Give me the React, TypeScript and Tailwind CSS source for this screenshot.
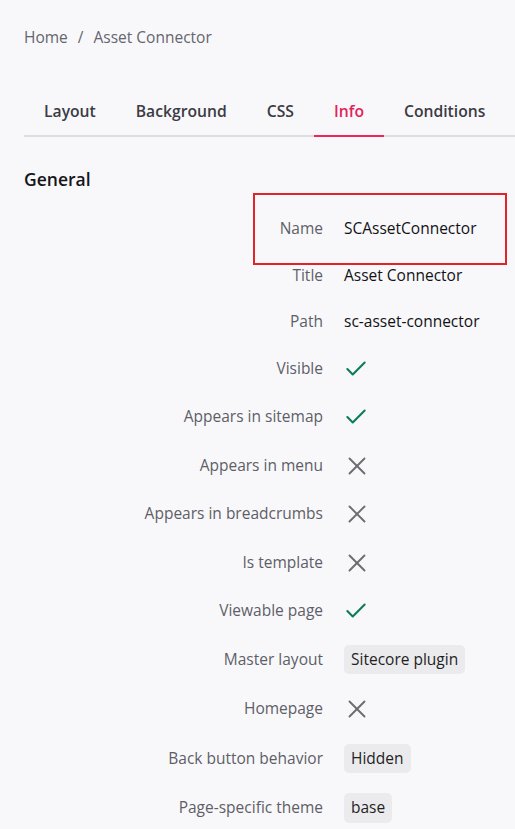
import { Check, X } from "lucide-react";

type Row = {
  label: string;
  kind: "text" | "yes" | "no" | "tag";
  value?: string;
  h: string;
};

const rows: Row[] = [
  { label: "Title", kind: "text", value: "Asset Connector", h: "h-[47px]" },
  { label: "Path", kind: "text", value: "sc-asset-connector", h: "h-[46px]" },
  { label: "Visible", kind: "yes", h: "h-[47px]" },
  { label: "Appears in sitemap", kind: "yes", h: "h-[49px]" },
  { label: "Appears in menu", kind: "no", h: "h-[49px]" },
  { label: "Appears in breadcrumbs", kind: "no", h: "h-[48px]" },
  { label: "Is template", kind: "no", h: "h-[49px]" },
  { label: "Viewable page", kind: "yes", h: "h-[48px]" },
  { label: "Master layout", kind: "tag", value: "Sitecore plugin", h: "h-[49px]" },
  { label: "Homepage", kind: "no", h: "h-[50px]" },
  { label: "Back button behavior", kind: "tag", value: "Hidden", h: "h-[49px]" },
  { label: "Page-specific theme", kind: "tag", value: "base", h: "h-[50px]" },
];

const tabs = ["Layout", "Background", "CSS", "Info", "Conditions"];

function Value({ row }: { row: Row }) {
  if (row.kind === "yes")
    return <Check className="-ml-[1px] h-[26px] w-[26px] text-[#0b7a5d]" strokeWidth={1.9} />;
  if (row.kind === "no")
    return <X className="-ml-[2px] h-[30px] w-[30px] text-[#6c6c72]" strokeWidth={1.5} />;
  if (row.kind === "tag")
    return (
      <span className="rounded-[5px] bg-[#ebebee] px-[7px] py-[3px] text-[#1f1f24]">{row.value}</span>
    );
  return <span className="text-[#121216]">{row.value}</span>;
}

export default function App() {
  return (
    <div className="min-h-[829px] bg-[#f8f8fa] font-['Open_Sans',sans-serif] text-[15.5px]">
      <div className="flex items-center gap-[10px] px-[24px] pt-[26px] text-[#65656d]">
        <span>Home</span>
        <span>/</span>
        <span>Asset Connector</span>
      </div>

      <div className="mx-[24px] mr-0 mt-[51px] flex border-b-2 border-[#dedee2] text-[15.7px]">
        {tabs.map((t) => (
          <div
            key={t}
            className={
              t === "Info"
                ? "-mb-[2px] border-b-2 border-[#f0265a] px-[20px] pb-[11px] font-semibold text-[#e0245a]"
                : "px-[20px] pb-[11px] font-semibold text-[#3b3b45]"
            }
          >
            {t}
          </div>
        ))}
      </div>

      <div className="px-[24px] pt-[29px]">
        <h2 className="text-[17.5px] font-semibold text-[#15151a]">General</h2>

        <div className="mt-[13px] flex flex-col">
          <div className="relative flex h-[47px] items-center">
            <div className="w-[299px] text-right text-[#5e5e68]">Name</div>
            <div className="ml-[21px] text-[#121216]">SCAssetConnector</div>
            <div className="pointer-events-none absolute left-[229px] top-[-12px] h-[72px] w-[254px] border-2 border-[#e2232a]" />
          </div>
          {rows.map((r) => (
            <div key={r.label} className={`flex items-center ${r.h}`}>
              <div className="w-[299px] text-right text-[#5e5e68]">{r.label}</div>
              <div className="ml-[21px] flex items-center">
                <Value row={r} />
              </div>
            </div>
          ))}
        </div>
      </div>
    </div>
  );
}
